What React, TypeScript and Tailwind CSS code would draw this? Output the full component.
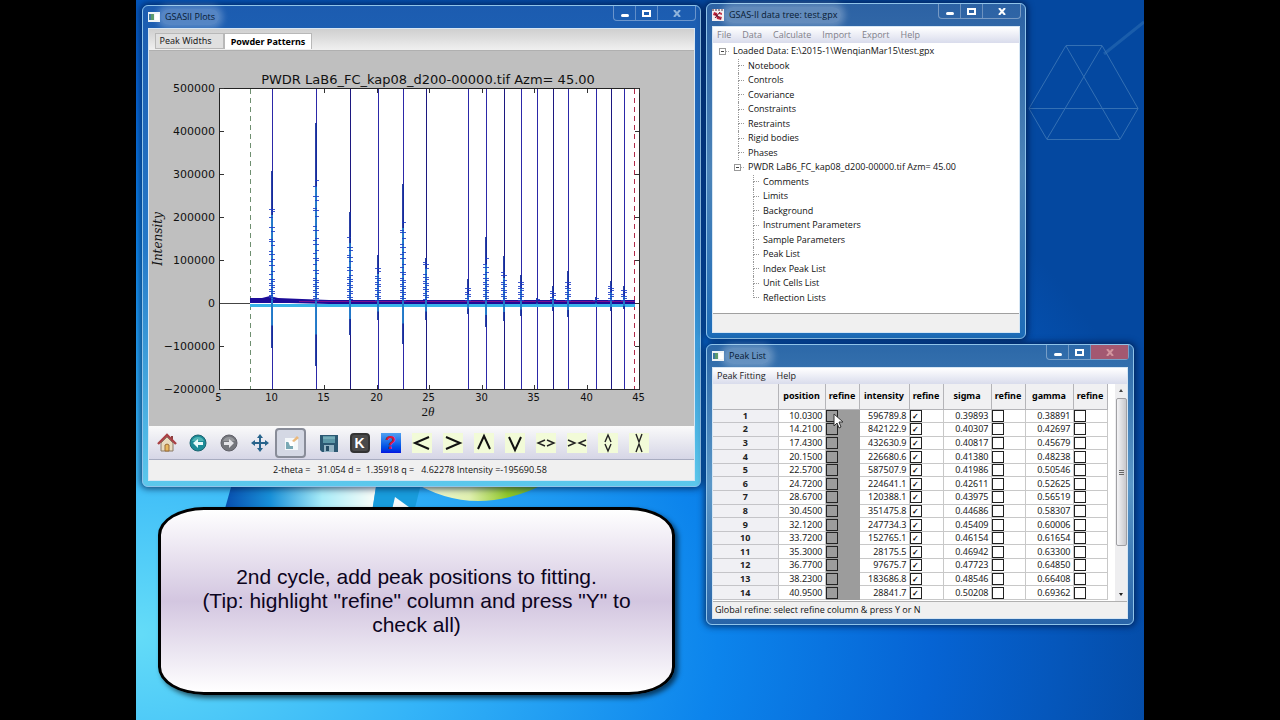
import type { ReactNode } from "react";
import clsx from "clsx";

const PEAKS = [
  { pos: 10.03, top: 171, mark: 209, low: 348 },
  { pos: 14.21, top: 123, mark: 180, low: 366 },
  { pos: 17.43, top: 212, mark: 237, low: 335 },
  { pos: 20.15, top: 255, mark: 268, low: 320 },
  { pos: 22.57, top: 184, mark: 222, low: 344 },
  { pos: 24.72, top: 258, mark: 262, low: 320 },
  { pos: 28.67, top: 279, mark: 288, low: 314 },
  { pos: 30.45, top: 237, mark: 258, low: 327 },
  { pos: 32.12, top: 256, mark: 272, low: 321 },
  { pos: 33.72, top: 275, mark: 282, low: 316 },
  { pos: 35.3, top: 298, mark: 299, low: 304 },
  { pos: 36.77, top: 286, mark: 291, low: 311 },
  { pos: 38.23, top: 271, mark: 282, low: 317 },
  { pos: 40.95, top: 297, mark: 298, low: 304 },
  { pos: 42.3, top: 281, mark: 286, low: 311 },
  { pos: 43.6, top: 286, mark: 290, low: 309 },
];

const ROWS = [
  ["10.0300", "596789.8", "0.39893", "0.38891"],
  ["14.2100", "842122.9", "0.40307", "0.42697"],
  ["17.4300", "432630.9", "0.40817", "0.45679"],
  ["20.1500", "226680.6", "0.41380", "0.48238"],
  ["22.5700", "587507.9", "0.41986", "0.50546"],
  ["24.7200", "224641.1", "0.42611", "0.52625"],
  ["28.6700", "120388.1", "0.43975", "0.56519"],
  ["30.4500", "351475.8", "0.44686", "0.58307"],
  ["32.1200", "247734.3", "0.45409", "0.60006"],
  ["33.7200", "152765.1", "0.46154", "0.61654"],
  ["35.3000", "28175.5", "0.46942", "0.63300"],
  ["36.7700", "97675.7", "0.47723", "0.64850"],
  ["38.2300", "183686.8", "0.48546", "0.66408"],
  ["40.9500", "28841.7", "0.50208", "0.69362"],
];

const COLUMNS = ["position", "intensity", "sigma", "gamma"];

const TREE = [
  { label: "Loaded Data: E:\\2015-1\\WenqianMar15\\test.gpx", depth: 0, open: true },
  { label: "Notebook", depth: 1 },
  { label: "Controls", depth: 1 },
  { label: "Covariance", depth: 1 },
  { label: "Constraints", depth: 1 },
  { label: "Restraints", depth: 1 },
  { label: "Rigid bodies", depth: 1 },
  { label: "Phases", depth: 1 },
  { label: "PWDR LaB6_FC_kap08_d200-00000.tif Azm= 45.00", depth: 1, open: true },
  { label: "Comments", depth: 2 },
  { label: "Limits", depth: 2 },
  { label: "Background", depth: 2 },
  { label: "Instrument Parameters", depth: 2 },
  { label: "Sample Parameters", depth: 2 },
  { label: "Peak List", depth: 2 },
  { label: "Index Peak List", depth: 2 },
  { label: "Unit Cells List", depth: 2 },
  { label: "Reflection Lists", depth: 2 },
];

const AppIcon = () => (
  <svg width="12" height="10" viewBox="0 0 12 10">
    <rect width="12" height="10" fill="#eef3f6" />
    <rect x="1" y="2" width="5" height="6" fill="#5a9a6a" />
    <rect x="1" y="2" width="2" height="6" fill="#3f78a0" />
    <rect x="7" y="2" width="4" height="6" fill="#fff" />
  </svg>
);

const TreeIcon = () => (
  <svg width="12" height="12" viewBox="0 0 12 12">
    <rect width="12" height="12" fill="#f4eef0" />
    <path d="M0 1h12" stroke="#402030" strokeWidth="1" strokeDasharray="2 1" />
    <path d="M2 3l3 1 1 3 4 1-1 3-4-1-1-3-3-1zM7 3l3 1v2l-3-1z" fill="#c02038" />
    <path d="M3 5l6 5M8 3l-5 6" stroke="#601830" strokeWidth="1" />
  </svg>
);

const CaptionButtons = ({ dim, red }: { dim?: boolean; red?: boolean }) => (
  <div className="-mr-px flex h-[15px] rounded-b-sm border border-t-0 border-white/35">
    <button aria-label="Minimize" className="flex w-[22px] items-center justify-center border-r border-white/30">
      <span className="mt-1 h-[3px] w-2 rounded-xs bg-white" />
    </button>
    <button aria-label="Maximize" className="flex w-[22px] items-center justify-center border-r border-white/30">
      <span className="h-[7px] w-[9px] border-2 border-white" />
    </button>
    <button
      aria-label="Close"
      className={clsx("flex w-[37px] items-center justify-center", red && "bg-[#b0566a]/90")}
    >
      <svg width="8" height="7" viewBox="0 0 8 7" fill="none" stroke={red ? "#d3959f" : dim ? "#8fb4dc" : "#fff"} strokeWidth="2">
        <path d="M1 0l6 7M7 0L1 7" />
      </svg>
    </button>
  </div>
);

const Window = ({ title, icon, className, dim, red, children }: {
  title: string
  icon: ReactNode
  className: string
  dim?: boolean
  red?: boolean
  children: ReactNode
}) => (
  <section
    className={clsx(
      "absolute flex flex-col rounded-md border border-[#8fc4ea] px-[5px] pb-[5px] shadow-[0_0_6px_2px_rgba(0,20,60,0.65)]",
      className
    )}
  >
    <header className="flex h-[22px] shrink-0 items-start justify-between">
      <div className="flex h-full items-center gap-px">
        {icon}
        <h2 className="rounded-full bg-white/25 px-1 text-[9px] leading-4 text-[#071a33] shadow-[0_0_6px_4px_rgba(255,255,255,0.25)]">
          {title}
        </h2>
      </div>
      <CaptionButtons dim={dim} red={red} />
    </header>
    <div className="flex min-h-0 flex-1 flex-col border border-[#d6e6f4] bg-[#f0f0f0]">{children}</div>
  </section>
);

// Plot area spans x 70..490 for 5..45 degrees and y 37..338 for the counts
const plotX = (theta: number) => Math.round(70 + (theta - 5) * 10.5) + 0.5;
const plotY = (count: number) => Math.round(252 - (count / 100000) * 43) + 0.5;

const PeakMarks = ({ x, from, seed }: { x: number; from: number; seed: number }) => {
  const marks = [];
  let y = from;
  let i = seed;
  while (y < 250) {
    const side = i % 3;
    marks.push(`M${x - (side === 1 ? 1 : 3)} ${y}h${side === 0 ? 6 : 4}`);
    const closeness = (250 - y) / 250;
    y += 2 + ((i * 7) % 5) * (closeness > 0.25 ? 2 : closeness > 0.1 ? 1 : 0);
    i += 1;
  }
  return <path d={marks.join("")} stroke="#1c3cc8" strokeWidth="1" opacity="0.85" />;
};

const PowderPlot = () => (
  <svg viewBox="0 0 545 375" className="min-h-0 w-full flex-1 bg-[#bfbfbf] font-['DejaVu_Sans',sans-serif]" role="img" aria-label="Powder pattern">
    <rect x="70.5" y="37.5" width="420" height="301" fill="#fff" stroke="#222" />
    {[5, 10, 15, 20, 25, 30, 35, 40, 45].map((t) => (
      <g key={t}>
        <path d={`M${plotX(t)} 338v-4M${plotX(t)} 38v4`} stroke="#333" />
        <text x={plotX(t) - 1} y="350" textAnchor="middle" fontSize="10" fill="#111">{t}</text>
      </g>
    ))}
    {[500000, 400000, 300000, 200000, 100000, 0, -100000, -200000].map((c) => (
      <g key={c}>
        <path d={`M71 ${plotY(c)}h4M490 ${plotY(c)}h-4`} stroke="#333" />
        <text x="66" y={plotY(c) + 3} textAnchor="end" fontSize="11" fill="#111">
          {String(c).replace("-", "−")}
        </text>
      </g>
    ))}
    <path d="M71 252.5h30" stroke="#444" />
    <path d="M101.5 38v300" stroke="#6f8f70" strokeDasharray="5 4" />
    <path d="M485.5 38v300" stroke="#b02848" strokeDasharray="5 4" />
    {PEAKS.map((p, i) => (
      <path key={p.pos} d={`M${plotX(p.pos)} 38v300`} stroke={i % 3 === 2 ? "#1c1880" : "#2c28a8"} />
    ))}
    <path d="M101 254.500h385" stroke="#38b4e8" strokeWidth="3" />
    <path d="M101 247h12l8-2 8 2 24 1 27 1h306v4H180l-40-1h-39z" fill="#1c0c98" />
    <path d="M150 250.500h336" stroke="#7a1090" strokeWidth="1" />
    {PEAKS.map((p, i) => (
      <g key={p.pos}>
        <path d={`M${plotX(p.pos) - 0.5} ${p.top - 51}V${p.low - 51}`} stroke="#142c9c" strokeWidth="2" opacity="0.9" />
        <path d={`M${plotX(p.pos) - 0.5} ${p.mark - 45}V${(p.low + 303) / 2 - 51}`} stroke="#28a0e0" strokeWidth="2" opacity="0.65" />
        <PeakMarks x={plotX(p.pos) - 0.5} from={p.mark - 50.5} seed={i} />
      </g>
    ))}
    <text x="279" y="33" textAnchor="middle" fontSize="13" fill="#111">
      PWDR LaB6_FC_kap08_d200-00000.tif Azm= 45.00
    </text>
    <text
      transform="translate(13 188) rotate(-90)"
      textAnchor="middle"
      fontSize="12"
      fill="#111"
      className="font-['DejaVu_Serif',serif] italic"
    >
      Intensity
    </text>
    <text x="279" y="365" textAnchor="middle" fontSize="13" fill="#111" className="font-['Liberation_Serif',serif]">
      2<tspan fontStyle="italic">θ</tspan>
    </text>
  </svg>
);

const Arrow = ({ d }: { d: string }) => (
  <svg width="20" height="20" viewBox="0 0 20 20" fill="none" stroke="#111" strokeWidth="2">
    <rect width="20" height="20" fill="#f2fbd8" stroke="none" />
    <path d={d} />
  </svg>
);

const ThinArrow = ({ d }: { d: string }) => (
  <svg width="20" height="20" viewBox="0 0 20 20" fill="none" stroke="#222" strokeWidth="1.4">
    <rect width="20" height="20" fill="#f2fbd8" stroke="none" />
    <path d={d} />
  </svg>
);

const TOOLS: { name: string; icon: ReactNode }[] = [
  {
    name: "Home",
    icon: (
      <svg width="20" height="20" viewBox="0 0 20 20">
        <path d="M4 10l6-6 6 6v8H4z" fill="#e8dcc0" stroke="#8a7a68" />
        <path d="M14 3h2v5h-2z" fill="#8a4040" />
        <path d="M1 11l9-9 9 9" fill="none" stroke="#a84044" strokeWidth="2.4" />
        <path d="M8 18v-6q2-2 4 0v6z" fill="#e8b85c" stroke="#9a6c38" />
      </svg>
    ),
  },
  {
    name: "Back",
    icon: (
      <svg width="18" height="18" viewBox="0 0 18 18">
        <circle cx="9" cy="9" r="8" fill="#1c8c98" stroke="#1c6470" />
        <path d="M3 7a6.500 6.500 0 0 1 12 0z" fill="#50b4b4" />
        <path d="M4 9l5-4v3h5v3H9v3z" fill="#e8fafa" />
      </svg>
    ),
  },
  {
    name: "Forward",
    icon: (
      <svg width="18" height="18" viewBox="0 0 18 18">
        <circle cx="9" cy="9" r="8" fill="#74767c" stroke="#606068" />
        <path d="M3 7a6.500 6.500 0 0 1 12 0z" fill="#96989c" />
        <path d="M14 9L9 5v3H4v3h5v3z" fill="#e4e4e8" />
      </svg>
    ),
  },
  {
    name: "Pan",
    icon: (
      <svg width="18" height="18" viewBox="0 0 18 18" fill="#28648c">
        <path d="M8 3h2v12H8zM3 8h12v2H3z" />
        <path d="M9 0l3 4H6zM9 18l3-4H6zM0 9l4-3v6zM18 9l-4-3v6z" />
      </svg>
    ),
  },
  {
    name: "Zoom",
    icon: (
      <svg width="20" height="20" viewBox="0 0 20 20">
        <rect x="4" y="5" width="13" height="12" fill="#f4f8fa" />
        <path d="M5 9h7v7H5z" fill="#78a8b4" />
        <path d="M7 8h6v5H9z" fill="#fff" />
        <path d="M11 8l5-5 2 2-5 4z" fill="#eab87c" />
      </svg>
    ),
  },
  {
    name: "Save",
    icon: (
      <svg width="20" height="20" viewBox="0 0 20 20">
        <path d="M1 2h18v17H3l-2-2z" fill="#2c5872" />
        <rect x="4" y="3" width="12" height="7" fill="#5c98a8" />
        <path d="M4 5h12" stroke="#8cc0c8" />
        <rect x="5" y="12" width="10" height="7" fill="#94b4c4" />
        <rect x="7" y="13" width="3" height="5" fill="#244c64" />
      </svg>
    ),
  },
  {
    name: "Key press",
    icon: (
      <span className="flex h-5 w-5 items-center justify-center rounded-sm border-2 border-[#333] bg-[#4a4a4a] font-['Liberation_Sans',sans-serif] text-sm font-bold text-white">
        K
      </span>
    ),
  },
  {
    name: "Help",
    icon: (
      <span className="flex h-5 w-5 items-center justify-center bg-linear-to-b from-[#50a0f0] to-[#0810e0] font-['Liberation_Sans',sans-serif] text-lg font-bold text-[#d81838]">
        ?
      </span>
    ),
  },
  { name: "Shift left", icon: <Arrow d="M17 4L3 10l14 6" /> },
  { name: "Shift right", icon: <Arrow d="M3 4l14 6-14 6" /> },
  { name: "Shift up", icon: <Arrow d="M4 16l6-13 6 13" /> },
  { name: "Shift down", icon: <Arrow d="M4 4l6 13 6-13" /> },
  { name: "Expand x", icon: <ThinArrow d="M9 7l-7 3 7 3M11 7l7 3-7 3" /> },
  { name: "Shrink x", icon: <ThinArrow d="M1 7l7 3-7 3M19 7l-7 3 7 3" /> },
  { name: "Expand y", icon: <ThinArrow d="M7 9l3-7 3 7M7 11l3 7 3-7" /> },
  { name: "Shrink y", icon: <ThinArrow d="M7 1l3 8 3-8M7 19l3-8 3 8" /> },
];

const PlotsWindow = () => (
  <Window
    title="GSASII Plots"
    icon={<AppIcon />}
    dim
    className="left-1.5 top-[5px] h-[482px] w-[559px] bg-linear-to-b from-[#1c5cb0] via-[#2478c8] to-[#5cc8ec]"
  >
    <div role="tablist" className="flex h-[22px] shrink-0 items-end border-b border-[#b0b0b0] bg-linear-to-b from-[#cfcfcf] to-[#f0f0f0] pb-px pl-1.5 font-['Noto_Sans',sans-serif]">
      <button role="tab" className="h-4 w-[69px] border border-[#b8b8b8] bg-[#e0e0e0] pr-2 text-[9px] leading-3 text-[#222]">
        Peak Widths
      </button>
      <button role="tab" aria-selected="true" className="h-4 w-[88px] border border-b-0 border-[#b8b8b8] bg-white text-[9px] font-bold leading-3 text-black">
        Powder Patterns
      </button>
    </div>
    <PowderPlot />
    <div role="toolbar" className="flex h-[34px] shrink-0 items-center border-b border-[#a8acc0] bg-linear-to-b from-[#fafafa] to-[#d6d6e6] px-0.5">
      {TOOLS.map((tool) => (
        <button
          key={tool.name}
          aria-label={tool.name}
          title={tool.name}
          className={clsx(
            "flex h-[30px] w-[31px] shrink-0 items-center justify-center",
            tool.name === "Zoom" && "mr-[7px] rounded-sm border-2 border-[#888c98] bg-[#d4d8e4]"
          )}
        >
          {tool.icon}
        </button>
      ))}
    </div>
    <footer className="flex h-5 shrink-0 items-center whitespace-pre pl-[124px] text-[9px] text-[#111]">
      {"2-theta =   31.054 d =  1.35918 q =   4.62278 Intensity =-195690.58"}
    </footer>
  </Window>
);

const MenuBar = ({ items, className }: { items: string[]; className: string }) => (
  <nav className={clsx("flex h-4 shrink-0 items-center bg-linear-to-b from-white to-[#d9dcec] pl-1 text-[9px] leading-4", className)}>
    {items.map((item) => (
      <button key={item}>{item}</button>
    ))}
  </nav>
);

const TreeRow = ({ item, last }: { item: (typeof TREE)[number]; last: boolean }) => (
  <li className={clsx("flex items-center", item.depth === 0 && "pl-1.5", item.depth === 1 && "pl-[25px]", item.depth === 2 && "pl-10")}>
    {item.open ? (
      <>
        <span className={clsx("flex h-[7px] w-[7px] items-center justify-center border border-[#999] bg-white", item.depth === 1 && "-ml-1")}>
          <span className="h-px w-[3px] bg-[#444]" />
        </span>
        <span className="mr-1 w-[3px] border-b border-dotted border-[#aaa]" />
      </>
    ) : (
      <span className="mr-1 flex h-full w-1.5 flex-col">
        <span className="flex-1 border-b border-l border-dotted border-[#999]" />
        <span className={clsx("flex-1 border-dotted border-[#999]", !last && "border-l")} />
      </span>
    )}
    <span className="whitespace-nowrap">{item.label}</span>
  </li>
);

const DataTreeWindow = () => (
  <Window
    title="GSAS-II data tree: test.gpx"
    icon={<TreeIcon />}
    className="left-[570px] top-[3px] h-[336px] w-[320px] bg-linear-to-b from-[#2c62a4] via-[#4c84b8] to-[#1c6cb8]"
  >
    <MenuBar items={["File", "Data", "Calculate", "Import", "Export", "Help"]} className="gap-[11px] text-[#80808a]" />
    <div className="flex-1 border-b border-[#a0a0a0] bg-white pt-px">
      <ul className="grid h-[261px] auto-rows-fr text-[9px] leading-3 text-[#111]">
        {TREE.map((item, i) => (
          <TreeRow key={item.label} item={item} last={i === TREE.length - 1} />
        ))}
      </ul>
    </div>
    <footer className="h-[18px] shrink-0" />
  </Window>
);

const Tick = ({ label, checked }: { label: string; checked?: boolean }) => (
  <input
    type="checkbox"
    aria-label={label}
    defaultChecked={checked}
    className="block h-3 w-3 appearance-none border border-[#222] text-center text-[8px] font-bold leading-[10px] text-black checked:before:content-['✓']"
  />
);

const PeakTable = () => (
  <table className="h-[216px] w-[394px] shrink-0 table-fixed border-collapse font-['Noto_Sans',sans-serif] text-[9px] leading-3 text-[#222]">
    <colgroup>
      <col className="w-[65px]" />
      <col className="w-[47px]" />
      <col className="w-[34px]" />
      <col className="w-[50px]" />
      <col className="w-[34px]" />
      <col className="w-[48px]" />
      <col className="w-[34px]" />
      <col className="w-[48px]" />
      <col className="w-[34px]" />
    </colgroup>
    <thead>
      <tr className="h-[25px] bg-[#f0f0f2] text-black">
        <th className="border border-t-0 border-l-0 border-[#b4b4b8] p-0" />
        {COLUMNS.flatMap((name) => [
          <th key={name} scope="col" className="border border-t-0 border-[#b4b4b8] p-0">{name}</th>,
          <th key={name + "-refine"} scope="col" className="border border-t-0 border-[#b4b4b8] p-0">refine</th>,
        ])}
      </tr>
    </thead>
    <tbody>
      {ROWS.map((row, r) => (
        <tr key={row[0]}>
          <th scope="row" className="border border-l-0 border-[#c4c4c8] bg-[#f0f0f4] p-0">{r + 1}</th>
          {row.flatMap((value, c) => [
            <td key={value} className="border border-[#c8c8c8] bg-white p-0 pr-0.5 text-right">{value}</td>,
            <td key={value + "-refine"} className={clsx("border p-0", c === 0 ? "border-[#9c9c9c] bg-[#9c9c9c]" : "border-[#c8c8c8] bg-white")}>
              <Tick label={`Refine ${COLUMNS[c]} of peak ${r + 1}`} checked={c === 1} />
            </td>,
          ])}
        </tr>
      ))}
    </tbody>
  </table>
);

const PeakListWindow = () => (
  <Window
    title="Peak List"
    icon={<AppIcon />}
    red
    className="left-[570px] top-[344px] h-[281px] w-[428px] bg-linear-to-b from-[#2c68a8] via-[#5c98c8] to-[#2864a8]"
  >
    <MenuBar items={["Peak Fitting", "Help"]} className="gap-[11px] text-[#222]" />
    <div className="flex min-h-0 flex-1 justify-between overflow-hidden border-b border-[#b0b0b0] bg-white">
      <PeakTable />
      <div className="flex w-3 flex-col items-center bg-[#eeeef0]">
        <svg width="12" height="14" viewBox="0 0 12 14">
          <path d="M4 8l2-3 2 3z" fill="#444" />
        </svg>
        <div className="flex h-[148px] w-[11px] flex-col items-center justify-center gap-px rounded-xs border border-[#a0a0a4] bg-linear-to-r from-[#f4f4f6] to-[#c8c8cc]">
          <span className="h-px w-[5px] bg-[#666]" />
          <span className="h-px w-[5px] bg-[#666]" />
          <span className="h-px w-[5px] bg-[#666]" />
        </div>
        <svg width="12" height="12" viewBox="0 0 12 12" className="mt-auto">
          <path d="M4 4l2 3 2-3z" fill="#222" />
        </svg>
      </div>
    </div>
    <footer className="flex h-4 shrink-0 items-center pl-0.5 text-[9px] text-[#111]">
      Global refine: select refine column &amp; press Y or N
    </footer>
  </Window>
);

const Wallpaper = () => (
  <svg className="absolute left-0 top-0" width="1008" height="720" viewBox="0 0 1008 720" fill="none">
    <defs>
      <linearGradient id="flag-blue" x1="90" x2="238" y1="0" y2="0" gradientUnits="userSpaceOnUse">
        <stop offset="0" stopColor="#0850b0" />
        <stop offset="0.3" stopColor="#1890d8" />
        <stop offset="0.65" stopColor="#a8ecf8" />
        <stop offset="1" stopColor="#f8fcf8" />
      </linearGradient>
      <linearGradient id="flag-green" x1="282" x2="410" y1="0" y2="0" gradientUnits="userSpaceOnUse">
        <stop offset="0" stopColor="#f0f8d8" />
        <stop offset="0.4" stopColor="#e0f0b0" />
        <stop offset="0.7" stopColor="#90c828" />
        <stop offset="1" stopColor="#60a838" />
      </linearGradient>
    </defs>
    <path d="M97 480h144q-2 14-5 32H88z" fill="url(#flag-blue)" />
    <path d="M241 480h45l-8 32h-42z" fill="#189cdc" />
    <path d="M259 497l18 13h-21z" fill="#f4fafc" />
    <path d="M274 480q66 42 142 0z" fill="url(#flag-green)" />
    <path d="M1008 22l-40 32" stroke="#5090c8" strokeWidth="3" opacity="0.3" />
    <g stroke="#3470b4" strokeWidth="1">
      <path d="M930 45.500h36l36 63-18 31h-73l-18-31z" />
      <path d="M893 108.500h109M930 46l54 93M966 46l-55 93" />
    </g>
  </svg>
);

export default function App() {
  return (
    <div className="min-h-screen bg-black font-['Open_Sans',sans-serif]">
      <main className="relative mx-auto min-h-screen max-w-[1008px] overflow-hidden bg-[radial-gradient(ellipse_105%_100%_at_0%_88%,#64dcf8_0%,#34b4f8_28%,#0c84ec_55%,#0664d4_75%,#0448a0_100%)]">
        <Wallpaper />
        <PlotsWindow />
        <DataTreeWindow />
        <PeakListWindow />
        <aside className="absolute left-[22px] top-[507px] flex h-[188px] w-[517px] items-center justify-center rounded-[46px/28px] border-[3px] border-black bg-linear-to-b from-white via-[#d3c6e0] to-white px-8 text-center font-['Liberation_Sans',sans-serif] text-[21px] leading-6 text-[#0c0420] shadow-[3px_3px_5px_rgba(0,0,0,0.6)]">
          <p>
            2nd cycle, add peak positions to fitting.
            <br />
            (Tip: highlight "refine" column and press "Y" to check all)
          </p>
        </aside>
        <svg className="absolute left-[697px] top-[413px]" width="11" height="17" viewBox="0 0 11 17">
          <path d="M1 1v12l3-3 2 5 2-1-2-5h4z" fill="#fff" stroke="#333" strokeWidth="1" />
        </svg>
      </main>
    </div>
  );
}
